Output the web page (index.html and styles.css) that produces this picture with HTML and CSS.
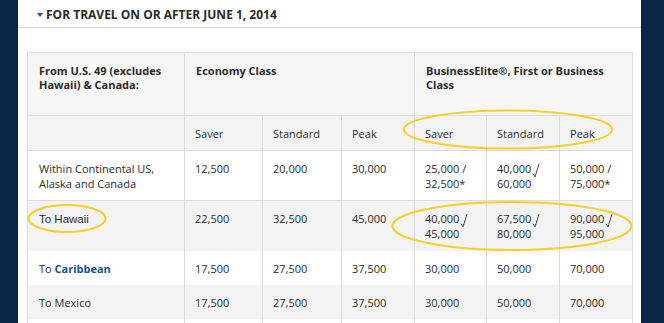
FILE: index.html
```html
<!DOCTYPE html>
<html>
<head>
<meta charset="utf-8">
<link rel="stylesheet" href="styles.css">
</head>
<body>
<div class="page">
  <div class="section-head">
    <span class="caret"></span>
    <span class="section-title">FOR TRAVEL ON OR AFTER JUNE 1, 2014</span>
  </div>
  <table class="award">
    <colgroup>
      <col class="c-from"><col class="c1"><col class="c2"><col class="c3"><col class="c4"><col class="c5"><col class="c6">
    </colgroup>
    <thead>
      <tr class="head1">
        <th>From U.S. 49 (excludes Hawaii) &amp; Canada:</th>
        <th colspan="3">Economy Class</th>
        <th colspan="3">BusinessElite®, First or Business Class</th>
      </tr>
      <tr class="head2">
        <td></td>
        <td>Saver</td><td>Standard</td><td>Peak</td>
        <td>Saver</td><td>Standard</td><td>Peak</td>
      </tr>
    </thead>
    <tbody>
      <tr class="r-white first">
        <td>Within Continental US, Alaska and Canada</td>
        <td>12,500</td><td>20,000</td><td>30,000</td>
        <td>25,000 /<br>32,500*</td>
        <td>40,000<svg class="tick" width="8" height="15" viewBox="0 0 8 15"><path d="M7 1 L3 14 L0.8 10.5" fill="none" stroke="#4a4a4a" stroke-width="1"/></svg><br>60,000</td>
        <td>50,000 /<br>75,000*</td>
      </tr>
      <tr class="r-gray hawaii">
        <td><span class="plain">To Hawaii</span></td>
        <td>22,500</td><td>32,500</td><td>45,000</td>
        <td>40,000<svg class="tick" width="8" height="15" viewBox="0 0 8 15"><path d="M7 1 L3 14 L0.8 10.5" fill="none" stroke="#4a4a4a" stroke-width="1"/></svg><br>45,000</td>
        <td>67,500<svg class="tick" width="8" height="15" viewBox="0 0 8 15"><path d="M7 1 L3 14 L0.8 10.5" fill="none" stroke="#4a4a4a" stroke-width="1"/></svg><br>80,000</td>
        <td>90,000<svg class="tick" width="8" height="15" viewBox="0 0 8 15"><path d="M7 1 L3 14 L0.8 10.5" fill="none" stroke="#4a4a4a" stroke-width="1"/></svg><br>95,000</td>
      </tr>
      <tr class="r-white">
        <td>To <a class="link" href="#">Caribbean</a></td>
        <td>17,500</td><td>27,500</td><td>37,500</td>
        <td>30,000</td><td>50,000</td><td>70,000</td>
      </tr>
      <tr class="r-gray">
        <td>To Mexico</td>
        <td>17,500</td><td>27,500</td><td>37,500</td>
        <td>30,000</td><td>50,000</td><td>70,000</td>
      </tr>
      <tr class="r-white">
        <td>To Central America</td>
        <td>17,500</td><td>27,500</td><td>37,500</td>
        <td>30,000</td><td>50,000</td><td>70,000</td>
      </tr>
    </tbody>
  </table>
</div>
<svg class="marks" width="664" height="323" viewBox="0 0 664 323">
  <ellipse cx="508" cy="129.5" rx="104" ry="19" fill="none" stroke="#f3d02a" stroke-width="2"/>
  <ellipse cx="67" cy="218.5" rx="38.5" ry="13.5" fill="none" stroke="#f3d02a" stroke-width="2"/>
  <ellipse cx="512" cy="226" rx="119.5" ry="24" fill="none" stroke="#f3d02a" stroke-width="2"/>
</svg>
</body>
</html>
```

FILE: styles.css
```css
html, body {
  margin: 0;
  padding: 0;
}
body {
  background: #0b2547;
  font-family: "Open Sans", "Noto Sans", sans-serif;
  color: #2b2b2b;
  position: relative;
  height: 323px;
  overflow: hidden;
}
.page {
  margin-left: 18px;
  width: 623px;
  min-height: 323px;
  background: #fff;
}
.section-head {
  height: 28px;
  border-bottom: 1px solid #d6d6d6;
  box-sizing: border-box;
  display: flex;
  align-items: center;
  padding: 1px 0 0 19px;
}
.caret {
  width: 0;
  height: 0;
  border-left: 3px solid transparent;
  border-right: 3px solid transparent;
  border-top: 4px solid #2c5591;
  margin-right: 3px;
  margin-top: 2px;
}
.section-title {
  font-weight: 700;
  font-size: 12px;
  color: #2a2a2a;
}
.award {
  margin: 24px 0 0 9px;
  width: 605px;
  table-layout: fixed;
  border-collapse: collapse;
  font-size: 11px;
  line-height: 15px;
}
.c-from { width: 157px; }
.c1 { width: 78px; }
.c2 { width: 79px; }
.c3 { width: 73px; }
.c4 { width: 72px; }
.c5 { width: 73px; }
.c6 { width: 73px; }
.award th, .award td {
  border-left: 1px solid #dcdcdc;
  border-right: 1px solid #dcdcdc;
  padding: 10px 11px 9px;
  text-align: left;
  vertical-align: top;
  font-weight: 400;
}
.award td:not(:first-child) {
  padding-left: 10px;
}
.head1 th {
  background: #f6f6f6;
  font-weight: 700;
  height: 41px;
  padding-top: 11px;
  padding-bottom: 10px;
  border-top: 1px solid #dcdcdc;
  border-bottom: 1px solid #dcdcdc;
  line-height: 14px;
}
.head2 td {
  background: #f3f3f3;
  border-bottom: 1px solid #dcdcdc;
}
.r-white td { background: #fff; }
.r-gray td { background: #f3f3f3; }
.first td {
  border-bottom: 1px solid #dcdcdc;
}
.hawaii td {
  padding-bottom: 10px;
}
.tick {
  vertical-align: -2px;
  margin-left: 1px;
  margin-top: -4px;
  margin-bottom: -3px;
}
.plain {
  font-family: "Liberation Sans", Arial, sans-serif;
  font-size: 11.5px;
}
.link {
  color: #1c4f94;
  font-weight: 700;
  text-decoration: none;
}
.marks {
  position: absolute;
  left: 0;
  top: 0;
  pointer-events: none;
}
```
